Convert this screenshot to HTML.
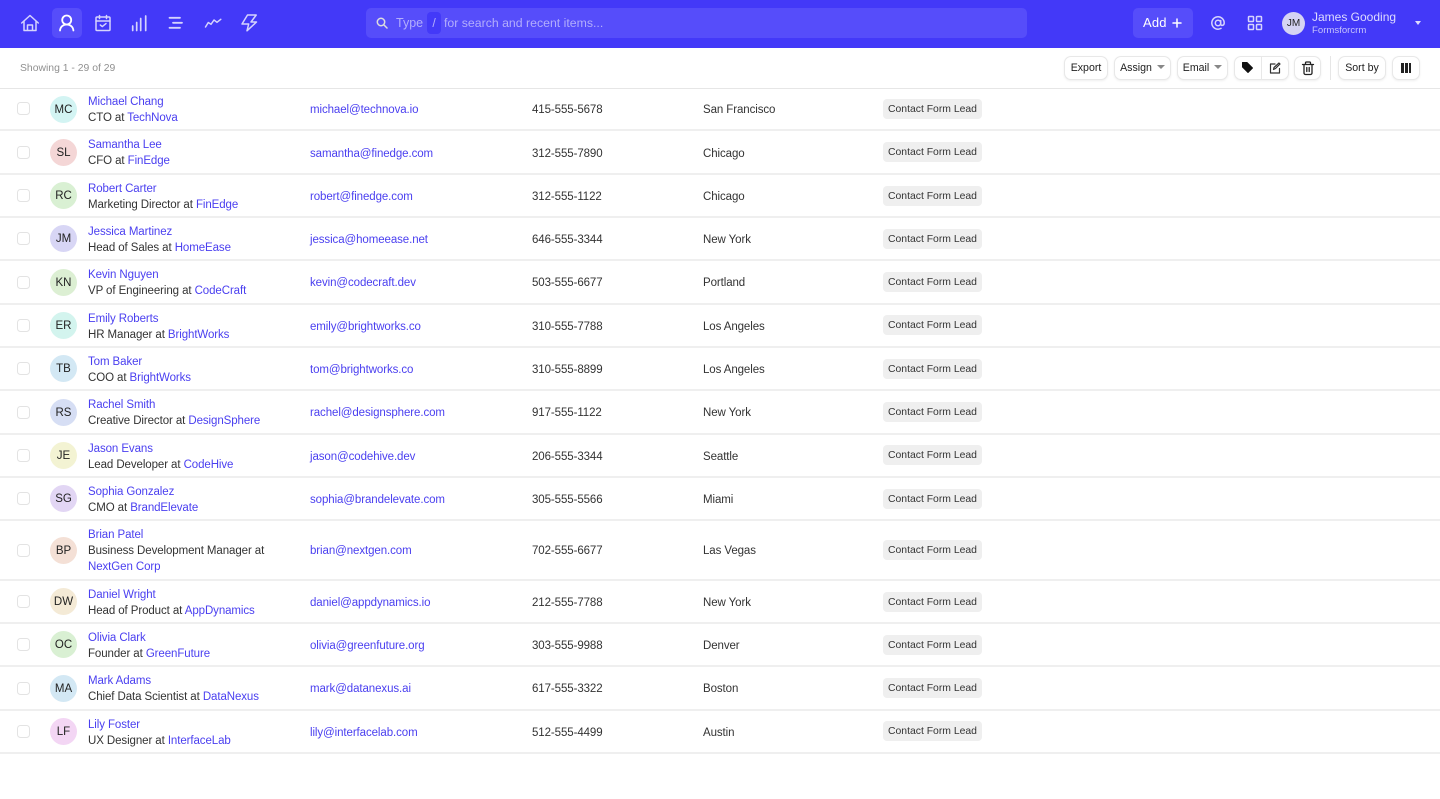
<!DOCTYPE html>
<html><head><meta charset="utf-8"><style>
*{box-sizing:border-box}
html,body{margin:0;padding:0;width:1440px;height:799px;overflow:hidden;background:#fff;font-family:"Liberation Sans",sans-serif;font-size:11.5px;color:#333;letter-spacing:-.09px}
.nav{position:absolute;left:0;top:0;width:1440px;height:48px;background:#4339f8}
.abs{position:absolute;white-space:nowrap}
svg{position:absolute;fill:none;stroke:#d5d3fd;stroke-width:1.5;stroke-linecap:round;stroke-linejoin:round}
.btn{position:absolute;top:56px;height:24px;border:1px solid #e8e8e8;border-radius:7px;background:#fff;box-shadow:0 1px 2px rgba(0,0,0,.07);font-size:10.6px;line-height:22px;text-align:center;color:#222;letter-spacing:0}
.car{display:inline-block;width:0;height:0;border:4px solid transparent;border-top:4px solid #888;border-bottom:0;vertical-align:2px;margin-left:5px}
.r{position:absolute;left:0;width:1440px;border-bottom:2px solid #efefef}
.cb{position:absolute;left:17px;width:13px;height:13px;border:1px solid #e3e3e3;border-radius:3.500px;background:#fff}
.av{position:absolute;left:50px;width:27px;height:27px;border-radius:50%;text-align:center;line-height:29px;color:#222;font-size:11.5px;letter-spacing:0}
.t{position:absolute;white-space:nowrap;line-height:16px;margin-top:1px}
a{color:#4a3ff0;text-decoration:none}
.tag{position:absolute;left:883px;width:99px;height:20px;background:#efefef;border-radius:4px;font-size:10.4px;line-height:22px;text-align:center;color:#333;letter-spacing:0}
</style></head><body>
<div class="nav">
<div class="abs" style="left:52px;top:8px;width:30px;height:30px;border-radius:5px;background:#564dfa"></div>
<svg style="left:0;top:0" width="300" height="48" viewBox="0 0 300 48">
<path d="M21.700 23 30 15.500 38.300 23M24 21v9.500h12V21M27.500 30.500V25h5v5.500"/>
<g stroke="#fff" stroke-width="1.800"><circle cx="66.700" cy="20" r="4.500"/><path d="M60 30.500c.4-3.800 3.200-6 6.700-6s6.300 2.200 6.700 6"/></g>
<rect x="96" y="17" width="14" height="13.500" rx="1"/><path d="M96 21h14M99.500 15.500v3M106.500 15.500v3M100.300 25l2 1.600 3.700-3"/>
<path stroke-width="1.700" d="M132.700 26v4.500M136.700 22.500v8M140.700 18.500v12M145.700 16v14.500"/>
<path stroke-width="1.800" d="M169.500 17.800h10.500M173 22.800h9M169.500 27.800h10.500"/>
<path d="M205.500 27 208.300 22.500 211 24.300 214 20 217 22.300 220.800 19.300"/>
<path d="M247.500 15h8.700L251 22h5.500l-9.500 8.800 1.700-6.800H242z"/>
</svg>
<div class="abs" style="left:366px;top:8px;width:661px;height:30px;background:#564dfa;border-radius:5px"></div>
<svg style="left:376px;top:17px;stroke:#ddd" width="12" height="12" viewBox="0 0 12 12"><circle cx="5" cy="5" r="3.700"/><path d="M8 8l3 3"/></svg>
<div class="abs" style="left:396px;top:15px;font-size:12.500px;line-height:16px;color:#b3aefc;letter-spacing:0">Type</div>
<div class="abs" style="left:427px;top:12px;width:14px;height:22px;background:#4339f8;border-radius:4px;text-align:center;line-height:22px;font-size:12.300px;color:#b3aefc">/</div>
<div class="abs" style="left:444px;top:15px;font-size:12.300px;line-height:16px;color:#b3aefc;letter-spacing:0">for search and recent items...</div>
<div class="abs" style="left:1133px;top:8px;width:60px;height:30px;background:#564dfa;border-radius:5px"></div>
<div class="abs" style="left:1143px;top:15px;font-size:13px;line-height:16px;color:#fff;letter-spacing:.2px">Add</div>
<svg style="left:1172px;top:18px;stroke:#fff" width="10" height="10" viewBox="0 0 10 10"><path d="M5 1v8M1 5h8"/></svg>
<svg style="left:1211px;top:16px" width="14" height="14" viewBox="0 0 14 14"><circle cx="7" cy="7" r="2.700"/><path d="M9.700 4.500V8c0 2 3.500 2 3.500-1A6.200 6.200 0 1 0 10 12.400"/></svg>
<svg style="left:1247px;top:15px" width="16" height="16" viewBox="0 0 16 16"><rect x="1.500" y="1.500" width="5" height="5" rx=".8"/><rect x="9.500" y="1.500" width="5" height="5" rx=".8"/><rect x="1.500" y="9.500" width="5" height="5" rx=".8"/><rect x="9.500" y="9.500" width="5" height="5" rx=".8"/></svg>
<div class="abs" style="left:1282px;top:12px;width:23px;height:23px;border-radius:50%;background:#d5d3f3;text-align:center;line-height:23px;font-size:10px;color:#222;letter-spacing:0">JM</div>
<div class="abs" style="left:1312px;top:10px;font-size:12px;line-height:15px;color:#dedcfe;letter-spacing:0">James Gooding</div>
<div class="abs" style="left:1312px;top:25px;font-size:9.600px;line-height:12px;color:#c6c3fd;letter-spacing:0">Formsforcrm</div>
<div class="abs" style="left:1415px;top:21px;width:0;height:0;border:3.500px solid transparent;border-top:4px solid #dedcfe;border-bottom:0"></div>
</div>
<div class="abs" style="left:20px;top:62px;font-size:10.400px;line-height:14px;color:#909090;letter-spacing:0">Showing 1 - 29 of 29</div>
<div class="btn" style="left:1064px;width:44px">Export</div>
<div class="btn" style="left:1114px;width:57px">Assign<i class="car"></i></div>
<div class="btn" style="left:1177px;width:51px">Email<i class="car"></i></div>
<div class="btn" style="left:1234px;width:55px"></div>
<div class="abs" style="left:1261px;top:57px;width:1px;height:22px;background:#e8e8e8"></div>
<svg style="left:1241px;top:61px;fill:#111;stroke:#111;stroke-width:1" width="13" height="13" viewBox="0 0 13 13"><path d="M1.500 1.500h4.500l5.500 5.500-4.500 4.500-5.500-5.500z"/></svg>
<svg style="left:1269px;top:62px;stroke:#333;stroke-width:1.200" width="12" height="12" viewBox="0 0 12 12"><path d="M6 2H1.500v9h9V6.500M4.500 7.500l.5-2L10 1l1 1-4.500 4.500z"/></svg>
<div class="btn" style="left:1294px;width:27px"></div>
<svg style="left:1301px;top:61px;stroke:#222;stroke-width:1.300" width="14" height="15" viewBox="0 0 14 15"><path d="M1.500 3.500h11M4.500 3.500V2a1 1 0 0 1 1-1h3a1 1 0 0 1 1 1v1.500M3 3.500V12a1.500 1.500 0 0 0 1.500 1.500h5A1.500 1.500 0 0 0 11 12V3.500M5.800 6.500v4M8.200 6.500v4"/></svg>
<div class="abs" style="left:1330px;top:56px;width:1px;height:24px;background:#e6e6e6"></div>
<div class="btn" style="left:1338px;width:48px">Sort by</div>
<div class="btn" style="left:1392px;width:28px"></div>
<div class="abs" style="left:1401px;top:63px;width:3px;height:10px;background:#222"></div>
<div class="abs" style="left:1405px;top:63px;width:3px;height:10px;background:#222"></div>
<div class="abs" style="left:1409px;top:63px;width:2px;height:10px;background:#222"></div>
<div class="abs" style="left:0;top:88px;width:1440px;height:1px;background:#e6e6e6"></div>

<div class="r" style="top:88px;height:43px"></div><div class="cb" style="top:102px"></div><div class="av" style="top:96px;background:#d3f4f3">MC</div><div class="t" style="left:88px;top:93px"><a>Michael Chang</a><br>CTO at <a>TechNova</a></div><div class="t" style="left:310px;top:101px"><a>michael@technova.io</a></div><div class="t" style="left:532px;top:101px">415-555-5678</div><div class="t" style="left:703px;top:101px">San Francisco</div><div class="tag" style="top:99px">Contact Form Lead</div>
<div class="r" style="top:131px;height:44px"></div><div class="cb" style="top:146px"></div><div class="av" style="top:139px;background:#f4d6d6">SL</div><div class="t" style="left:88px;top:136px"><a>Samantha Lee</a><br>CFO at <a>FinEdge</a></div><div class="t" style="left:310px;top:145px"><a>samantha@finedge.com</a></div><div class="t" style="left:532px;top:145px">312-555-7890</div><div class="t" style="left:703px;top:145px">Chicago</div><div class="tag" style="top:142px">Contact Form Lead</div>
<div class="r" style="top:175px;height:43px"></div><div class="cb" style="top:189px"></div><div class="av" style="top:182px;background:#d9f0d3">RC</div><div class="t" style="left:88px;top:180px"><a>Robert Carter</a><br>Marketing Director at <a>FinEdge</a></div><div class="t" style="left:310px;top:188px"><a>robert@finedge.com</a></div><div class="t" style="left:532px;top:188px">312-555-1122</div><div class="t" style="left:703px;top:188px">Chicago</div><div class="tag" style="top:186px">Contact Form Lead</div>
<div class="r" style="top:218px;height:43px"></div><div class="cb" style="top:232px"></div><div class="av" style="top:225px;background:#d8d6f5">JM</div><div class="t" style="left:88px;top:223px"><a>Jessica Martinez</a><br>Head of Sales at <a>HomeEase</a></div><div class="t" style="left:310px;top:231px"><a>jessica@homeease.net</a></div><div class="t" style="left:532px;top:231px">646-555-3344</div><div class="t" style="left:703px;top:231px">New York</div><div class="tag" style="top:229px">Contact Form Lead</div>
<div class="r" style="top:261px;height:44px"></div><div class="cb" style="top:276px"></div><div class="av" style="top:269px;background:#dcefd3">KN</div><div class="t" style="left:88px;top:266px"><a>Kevin Nguyen</a><br>VP of Engineering at <a>CodeCraft</a></div><div class="t" style="left:310px;top:274px"><a>kevin@codecraft.dev</a></div><div class="t" style="left:532px;top:274px">503-555-6677</div><div class="t" style="left:703px;top:274px">Portland</div><div class="tag" style="top:272px">Contact Form Lead</div>
<div class="r" style="top:305px;height:43px"></div><div class="cb" style="top:319px"></div><div class="av" style="top:312px;background:#d3f4ee">ER</div><div class="t" style="left:88px;top:310px"><a>Emily Roberts</a><br>HR Manager at <a>BrightWorks</a></div><div class="t" style="left:310px;top:318px"><a>emily@brightworks.co</a></div><div class="t" style="left:532px;top:318px">310-555-7788</div><div class="t" style="left:703px;top:318px">Los Angeles</div><div class="tag" style="top:315px">Contact Form Lead</div>
<div class="r" style="top:348px;height:43px"></div><div class="cb" style="top:362px"></div><div class="av" style="top:355px;background:#d3e8f4">TB</div><div class="t" style="left:88px;top:353px"><a>Tom Baker</a><br>COO at <a>BrightWorks</a></div><div class="t" style="left:310px;top:361px"><a>tom@brightworks.co</a></div><div class="t" style="left:532px;top:361px">310-555-8899</div><div class="t" style="left:703px;top:361px">Los Angeles</div><div class="tag" style="top:359px">Contact Form Lead</div>
<div class="r" style="top:391px;height:44px"></div><div class="cb" style="top:406px"></div><div class="av" style="top:399px;background:#d6def4">RS</div><div class="t" style="left:88px;top:396px"><a>Rachel Smith</a><br>Creative Director at <a>DesignSphere</a></div><div class="t" style="left:310px;top:404px"><a>rachel@designsphere.com</a></div><div class="t" style="left:532px;top:404px">917-555-1122</div><div class="t" style="left:703px;top:404px">New York</div><div class="tag" style="top:402px">Contact Form Lead</div>
<div class="r" style="top:435px;height:43px"></div><div class="cb" style="top:449px"></div><div class="av" style="top:442px;background:#f3f3d3">JE</div><div class="t" style="left:88px;top:440px"><a>Jason Evans</a><br>Lead Developer at <a>CodeHive</a></div><div class="t" style="left:310px;top:448px"><a>jason@codehive.dev</a></div><div class="t" style="left:532px;top:448px">206-555-3344</div><div class="t" style="left:703px;top:448px">Seattle</div><div class="tag" style="top:445px">Contact Form Lead</div>
<div class="r" style="top:478px;height:43px"></div><div class="cb" style="top:492px"></div><div class="av" style="top:485px;background:#e2d6f4">SG</div><div class="t" style="left:88px;top:483px"><a>Sophia Gonzalez</a><br>CMO at <a>BrandElevate</a></div><div class="t" style="left:310px;top:491px"><a>sophia@brandelevate.com</a></div><div class="t" style="left:532px;top:491px">305-555-5566</div><div class="t" style="left:703px;top:491px">Miami</div><div class="tag" style="top:489px">Contact Form Lead</div>
<div class="r" style="top:521px;height:60px"></div><div class="cb" style="top:544px"></div><div class="av" style="top:537px;background:#f4e0d6">BP</div><div class="t" style="left:88px;top:526px"><a>Brian Patel</a><br>Business Development Manager at<br><a>NextGen Corp</a></div><div class="t" style="left:310px;top:542px"><a>brian@nextgen.com</a></div><div class="t" style="left:532px;top:542px">702-555-6677</div><div class="t" style="left:703px;top:542px">Las Vegas</div><div class="tag" style="top:540px">Contact Form Lead</div>
<div class="r" style="top:581px;height:43px"></div><div class="cb" style="top:595px"></div><div class="av" style="top:588px;background:#f4ead6">DW</div><div class="t" style="left:88px;top:586px"><a>Daniel Wright</a><br>Head of Product at <a>AppDynamics</a></div><div class="t" style="left:310px;top:594px"><a>daniel@appdynamics.io</a></div><div class="t" style="left:532px;top:594px">212-555-7788</div><div class="t" style="left:703px;top:594px">New York</div><div class="tag" style="top:592px">Contact Form Lead</div>
<div class="r" style="top:624px;height:43px"></div><div class="cb" style="top:638px"></div><div class="av" style="top:631px;background:#d9f0d3">OC</div><div class="t" style="left:88px;top:629px"><a>Olivia Clark</a><br>Founder at <a>GreenFuture</a></div><div class="t" style="left:310px;top:637px"><a>olivia@greenfuture.org</a></div><div class="t" style="left:532px;top:637px">303-555-9988</div><div class="t" style="left:703px;top:637px">Denver</div><div class="tag" style="top:635px">Contact Form Lead</div>
<div class="r" style="top:667px;height:44px"></div><div class="cb" style="top:682px"></div><div class="av" style="top:675px;background:#d3e8f4">MA</div><div class="t" style="left:88px;top:672px"><a>Mark Adams</a><br>Chief Data Scientist at <a>DataNexus</a></div><div class="t" style="left:310px;top:680px"><a>mark@datanexus.ai</a></div><div class="t" style="left:532px;top:680px">617-555-3322</div><div class="t" style="left:703px;top:680px">Boston</div><div class="tag" style="top:678px">Contact Form Lead</div>
<div class="r" style="top:711px;height:43px"></div><div class="cb" style="top:725px"></div><div class="av" style="top:718px;background:#f3d6f4">LF</div><div class="t" style="left:88px;top:716px"><a>Lily Foster</a><br>UX Designer at <a>InterfaceLab</a></div><div class="t" style="left:310px;top:724px"><a>lily@interfacelab.com</a></div><div class="t" style="left:532px;top:724px">512-555-4499</div><div class="t" style="left:703px;top:724px">Austin</div><div class="tag" style="top:721px">Contact Form Lead</div>
</body></html>
